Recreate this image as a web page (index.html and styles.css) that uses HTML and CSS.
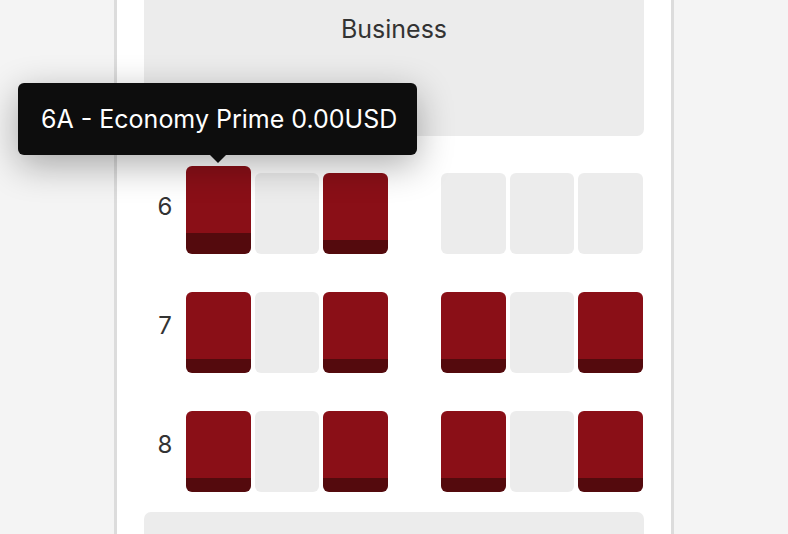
FILE: index.html
```html
<!DOCTYPE html>
<html lang="en">
<head>
<meta charset="utf-8">
<title>Seat map</title>
<link rel="stylesheet" href="styles.css">
</head>
<body>
<div class="panel">
  <div class="cabin-head">Business</div>
  <div class="rows">
    <div class="row">
      <div class="label">6</div>
      <div class="seat taken selected">
        <div class="tooltip">6A - Economy Prime 0.00USD</div>
      </div>
      <div class="seat free"></div>
      <div class="seat taken"></div>
      <div class="aisle"></div>
      <div class="seat free"></div>
      <div class="seat free"></div>
      <div class="seat free"></div>
    </div>
    <div class="row">
      <div class="label">7</div>
      <div class="seat taken"></div>
      <div class="seat free"></div>
      <div class="seat taken"></div>
      <div class="aisle"></div>
      <div class="seat taken"></div>
      <div class="seat free"></div>
      <div class="seat taken"></div>
    </div>
    <div class="row">
      <div class="label">8</div>
      <div class="seat taken"></div>
      <div class="seat free"></div>
      <div class="seat taken"></div>
      <div class="aisle"></div>
      <div class="seat taken"></div>
      <div class="seat free"></div>
      <div class="seat taken"></div>
    </div>
  </div>
  <div class="cabin-foot"></div>
</div>
</body>
</html>
```

FILE: styles.css
```css
html, body {
  margin: 0;
  padding: 0;
  height: 100%;
  overflow: hidden;
}
body {
  background: #f4f4f4;
  font-family: Inter, "Noto Sans", sans-serif;
  color: #333;
}
.panel {
  box-sizing: border-box;
  margin-left: 114px;
  width: 560px;
  height: 534px;
  background: #fff;
  border-left: 3px solid #dcdcdc;
  border-right: 3px solid #dcdcdc;
  padding: 0 27px 0 27px;
  display: flex;
  flex-direction: column;
}
.cabin-head {
  background: #ececec;
  height: 136px;
  border-radius: 0 0 7px 7px;
  text-align: center;
  font-size: 25px;
  line-height: 30px;
  padding-top: 14px;
  box-sizing: border-box;
  flex-shrink: 0;
}
.rows {
  display: flex;
  flex-direction: column;
  gap: 38px;
  padding: 37px 0 20px 0;
}
.row {
  display: flex;
  align-items: flex-end;
  gap: 4px;
  height: 81px;
}
.label {
  box-sizing: border-box;
  width: 38px;
  align-self: stretch;
  display: flex;
  align-items: center;
  justify-content: center;
  padding: 0 0 15px 4px;
  font-size: 24px;
  flex-shrink: 0;
}
.aisle {
  width: 45.5px;
  flex-shrink: 0;
}
.seat {
  width: 64.5px;
  height: 81px;
  border-radius: 6px;
  flex-shrink: 0;
  position: relative;
  box-sizing: border-box;
}
.seat.free {
  background: #ececec;
}
.seat.taken {
  background: #8a0f17;
  border-bottom: 14px solid #540a0d;
}
.seat.selected {
  height: 88px;
  border-bottom-width: 21px;
}
.tooltip {
  position: absolute;
  left: -168px;
  top: -83px;
  width: 399px;
  height: 72px;
  box-sizing: border-box;
  padding-left: 23px;
  background: #0d0d0d;
  color: #fff;
  border-radius: 6px;
  font-size: 25px;
  line-height: 72px;
  white-space: nowrap;
  box-shadow: 0 10px 36px rgba(0, 0, 0, 0.32);
  z-index: 2;
}
.tooltip::after {
  content: "";
  position: absolute;
  left: 192px;
  top: 72px;
  border-left: 8px solid transparent;
  border-right: 8px solid transparent;
  border-top: 8px solid #0d0d0d;
}
.cabin-foot {
  background: #ececec;
  height: 22px;
  border-radius: 7px 7px 0 0;
  flex-shrink: 0;
}
```
